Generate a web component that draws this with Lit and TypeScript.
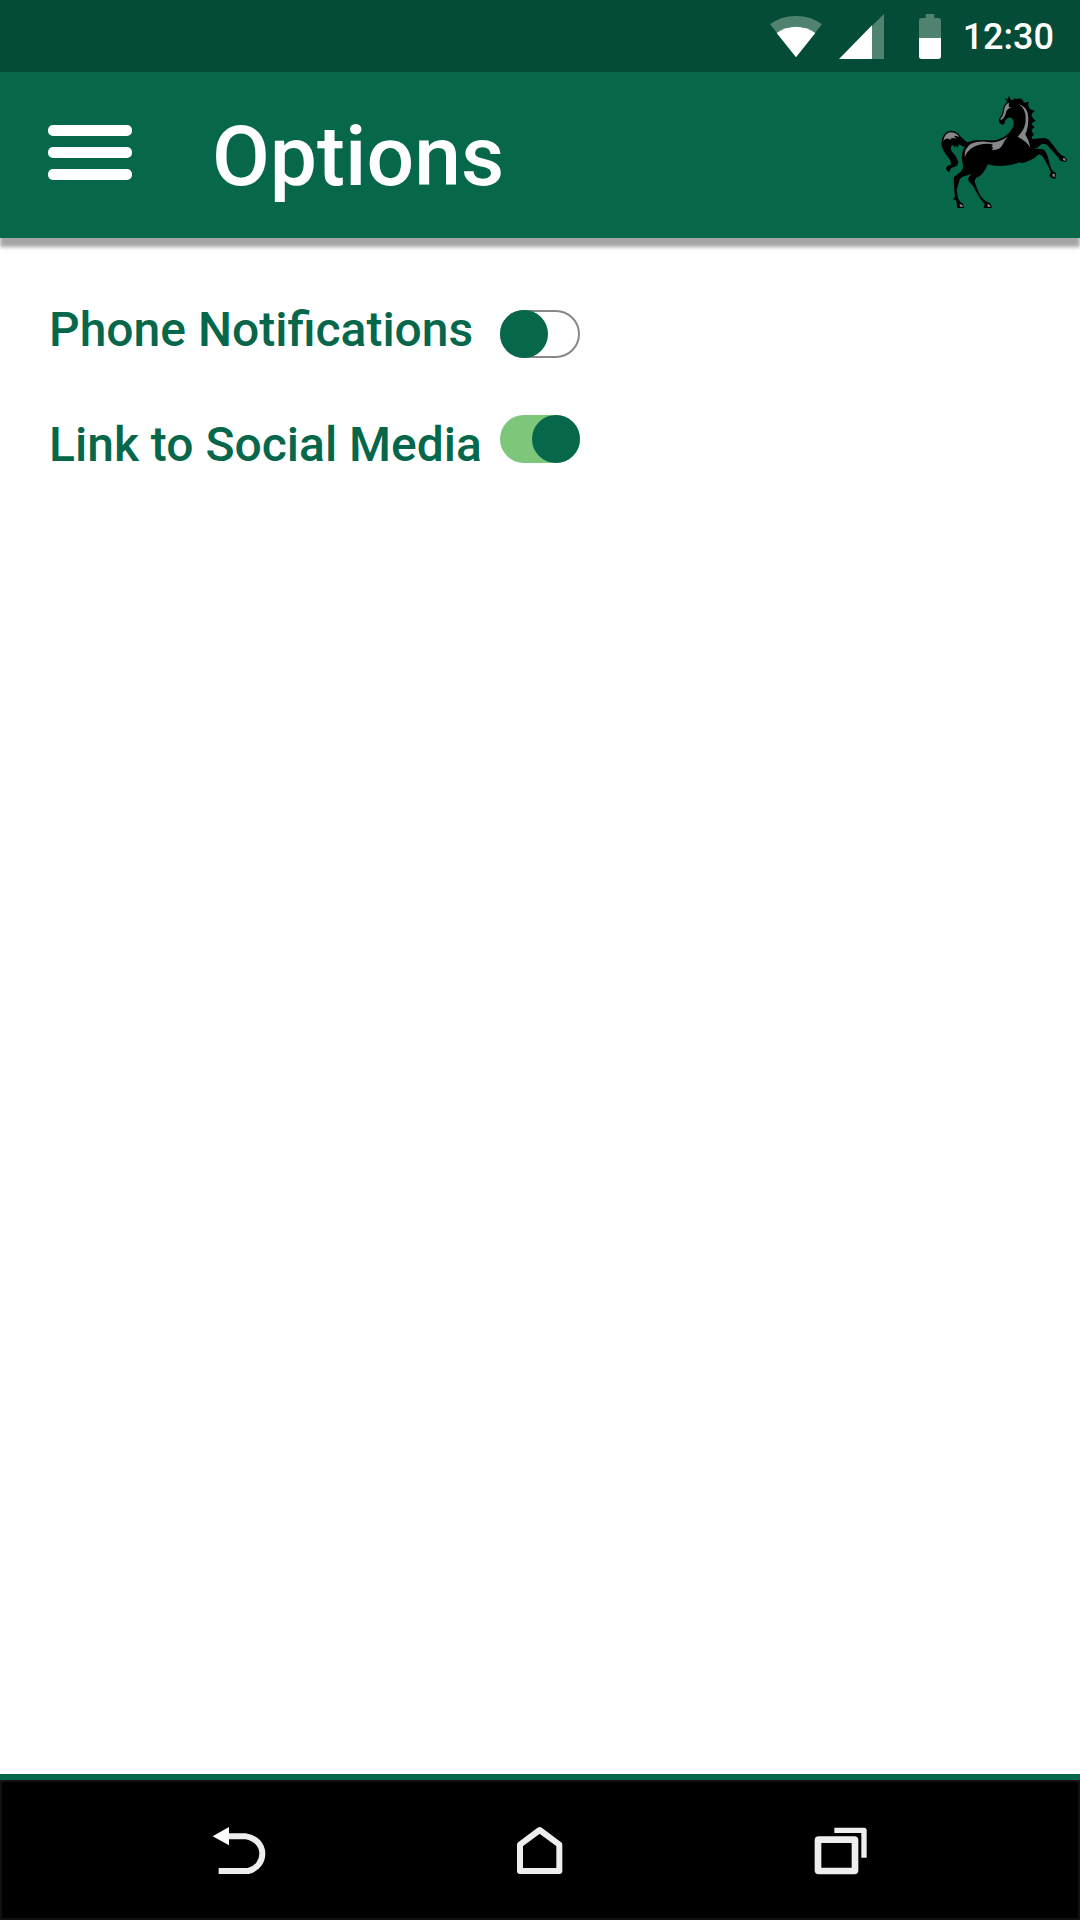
import { LitElement, html, css, svg } from "lit";
import { customElement, property, state } from "lit/decorators.js";

const horse = svg`
  <path d="M232 51 L224 39 L234 43 L236 32 L243 44 Q251 47 254 39 Q259 44 264 41 Q277 39 282 53 L297 50 Q292 59 297 67 Q299 76 315 77 Q302 86 306 94 Q308 102 318 107 Q305 111 306 119 L314 127 Q304 130 306 139 L312 151 Q303 151 307 162
    L344 159 Q355 161 364 174 L388 205 Q394 213 404 215 L411 223 L408 231 L395 229 Q388 228 386 219 L359 188 Q350 176 340 176 Q330 177 323 188 L312 191
    L336 192 Q346 195 352 211 L363 249 Q366 259 378 264 L376 281 L366 280 L357 272 L363 263 L354 242 L343 222 Q337 210 326 208 Q309 225 292 229 Q279 237 269 232 Q240 244 210 243 Q190 243 173 238 Q168 254 158 265 Q151 275 138 279 L133 289 L143 315 Q148 330 159 341 Q166 351 178 353 L184 361 L185 369 L161 369 L164 358 L152 343 L136 316 Q130 300 117 290 L114 280 L124 267 Q110 272 98 275 Q88 280 87 292 L80 313 L84 340 Q89 352 98 355 L102 369 L82 369 L80 353 L77 345 L69 343 L75 335 L72 306 L71 277 L92 260 Q101 252 99 239 Q91 215 101 190 L106 184 Q100 187 96 182 L86 178 Q86 186 82 188 L78 180 L75 188 Q71 179 66 181 Q59 190 66 200 Q83 218 85 232 Q83 243 73 246 Q60 247 59 261 Q48 258 48 249 Q50 241 62 239 Q66 235 57 220 Q35 196 34 175 Q36 149 54 139 Q73 134 86 147 Q93 158 112 172 Q130 163 166 165 Q195 170 217 158 Q242 145 250 123 Q254 105 244 98 Q232 96 225 107 L224 116 L216 119 L208 113 L207 102 Q217 90 218 77 Q221 59 232 51Z" fill="#000"/>
  <g fill="#85878a">
    <path d="M265 57 Q295 65 295 100 Q295 130 286 148 Q297 165 301 189 Q291 169 263 155 Q289 131 287 100 Q287 70 265 57Z"/>
    <path d="M233 55 L237 54 L236 65 L243 67 Q234 71 229 78 Q227 94 215 104 Q211 106 211 101 Q221 92 223 72 Q226 60 233 55Z"/>
    <path d="M104 217 Q102 190 123 176 Q148 165 180 172 Q205 174 233 155 Q221 169 216 182 Q207 196 185 195 Q193 190 184 183 Q194 180 183 177 Q152 174 129 187 Q111 198 104 217Z"/>
    <path d="M40 168 Q44 142 64 142 Q82 143 88 157 Q79 150 72 153 L80 161 Q68 157 61 162 L63 166 Q50 154 40 168Z"/>
    <path d="M400 218 L407 221 L406 228 L399 225Z M368 266 L375 267 L373 277 L367 273Z M89 357 L96 359 L99 366 L90 365Z M172 357 L179 359 L182 366 L173 365Z"/>
  </g>`;

@customElement("status-bar")
class StatusBar extends LitElement {
  static styles = css`
    :host {
      display: flex;
      align-items: center;
      justify-content: flex-end;
      height: 72px;
      padding-right: 26px;
      background: #044b38;
      color: #fff;
    }
    svg { display: block; }
    .wifi { margin-right: 17px; }
    .cell { margin-right: 35px; }
    .battery { margin-right: 22px; }
    .clock {
      padding-top: 2px;
      font-size: 36px;
      line-height: 44px;
      font-weight: 500;
    }
  `;

  render() {
    return html`
      <svg class="wifi" width="52" height="45" viewBox="0 0 156 135" role="img" aria-label="Wi-Fi">
        <path d="M0 31 Q33 6 78 6 Q123 6 156 31 L135 57 Q110 38 78 38 Q46 38 21 57Z" fill="#50836f"/>
        <path d="M20 57 Q46 38 78 38 Q110 38 136 57 L78 130Z" fill="#fff"/>
      </svg>
      <svg class="cell" width="45" height="45" viewBox="0 0 135 135" role="img" aria-label="Signal">
        <path d="M135 0V135H99V35Z" fill="#50836f"/>
        <path d="M99 34V135H0Z" fill="#fff"/>
      </svg>
      <svg class="battery" width="22" height="45" viewBox="0 0 66 135" role="img" aria-label="Battery">
        <path d="M20 0H46V12H58Q66 12 66 20V72H0V20Q0 12 8 12H20Z" fill="#50836f"/>
        <path d="M0 72H66V127Q66 135 58 135H8Q0 135 0 127Z" fill="#fff"/>
      </svg>
      <time class="clock">12:30</time>
    `;
  }
}

@customElement("app-header")
class AppHeader extends LitElement {
  @property() heading = "";

  static styles = css`
    :host {
      display: flex;
      align-items: center;
      height: 166px;
      padding: 0 0 0 48px;
      box-sizing: border-box;
      background: #06674b;
      color: #fff;
      box-shadow: 0 9px 4px #a5a5a5;
      position: relative;
    }
    .menu {
      display: flex;
      flex-direction: column;
      gap: 11px;
      width: 84px;
      padding: 0 0 5px;
      border: 0;
      background: none;
      cursor: pointer;
    }
    .bar {
      height: 11px;
      border-radius: 5px;
      background: #fff;
    }
    h1 {
      flex: 1;
      margin: 0 0 0 80px;
      padding-top: 4px;
      font-size: 84px;
      line-height: 100px;
      font-weight: 500;
    }
    .logo {
      display: block;
      padding-bottom: 6px;
    }
  `;

  render() {
    return html`
      <button class="menu" aria-label="Menu">
        <span class="bar"></span><span class="bar"></span><span class="bar"></span>
      </button>
      <h1>${this.heading}</h1>
      <svg class="logo" width="150" height="135" viewBox="0 0 450 405" role="img" aria-label="Black horse">${horse}</svg>
    `;
  }
}

@customElement("nav-bar")
class NavBar extends LitElement {
  static styles = css`
    :host {
      display: block;
      border-top: 6px solid #06674b;
      background: #000;
    }
    nav {
      display: flex;
      justify-content: center;
      align-items: center;
      gap: 180px;
      height: 140px;
      box-sizing: border-box;
      border: 2px solid #111;
    }
    button {
      padding: 0;
      border: 0;
      background: none;
      cursor: pointer;
    }
    svg { display: block; }
  `;

  render() {
    return html`
      <nav aria-label="System">
        <button aria-label="Back">
          <svg width="120" height="80" viewBox="0 150 360 240">
            <path d="M140 229H198C262 240 262 318 205 333H116" fill="none" stroke="#eee" stroke-width="18"/>
            <path d="M98 229L147 201V256Z" fill="#fff"/>
          </svg>
        </button>
        <button aria-label="Home">
          <svg width="120" height="80" viewBox="0 150 360 240">
            <path d="M120 333V254L179 210L238 254V333Z" fill="none" stroke="#eee" stroke-width="18" stroke-linejoin="round"/>
          </svg>
        </button>
        <button aria-label="Recent apps">
          <svg width="120" height="80" viewBox="0 150 360 240">
            <rect x="114" y="239" width="111" height="94" rx="2" fill="none" stroke="#eee" stroke-width="20" stroke-linejoin="round"/>
            <path d="M163 211H252V293" fill="none" stroke="#eee" stroke-width="16" stroke-linejoin="round"/>
          </svg>
        </button>
      </nav>
    `;
  }
}

@customElement("app-root")
class AppRoot extends LitElement {
  @state() private notifications = false;
  @state() private social = true;

  static styles = css`
    :host {
      display: flex;
      flex-direction: column;
      min-height: 100vh;
      background: #fff;
      font-family: Roboto, "Liberation Sans", sans-serif;
    }
    main {
      flex: 1;
      display: grid;
      grid-template-columns: auto auto;
      justify-content: start;
      align-content: start;
      gap: 57px 18px;
      padding: 62px 49px;
    }
    label {
      padding-top: 2px;
      color: #06674b;
      font-size: 48px;
      line-height: 56px;
      font-weight: 500;
    }
    .switch {
      appearance: none;
      box-sizing: border-box;
      display: flex;
      width: 80px;
      height: 48px;
      margin: 0;
      border-radius: 24px;
      box-shadow: inset 0 0 0 2px #888;
      cursor: pointer;
      align-self: start;
    }
    .switch.low { align-self: end; }
    .switch::before {
      content: "";
      width: 48px;
      height: 48px;
      border-radius: 50%;
      background: #06674b;
    }
    .switch:checked {
      justify-content: flex-end;
      background: #7dc67a;
      box-shadow: none;
    }
  `;

  render() {
    return html`
      <status-bar></status-bar>
      <app-header heading="Options"></app-header>
      <main>
        <label for="notifications">Phone Notifications</label>
        <input class="switch low" id="notifications" type="checkbox" role="switch"
          .checked=${this.notifications}
          @change=${(e: Event) => (this.notifications = (e.target as HTMLInputElement).checked)}>
        <label for="social">Link to Social Media</label>
        <input class="switch" id="social" type="checkbox" role="switch"
          .checked=${this.social}
          @change=${(e: Event) => (this.social = (e.target as HTMLInputElement).checked)}>
      </main>
      <nav-bar></nav-bar>
    `;
  }
}
